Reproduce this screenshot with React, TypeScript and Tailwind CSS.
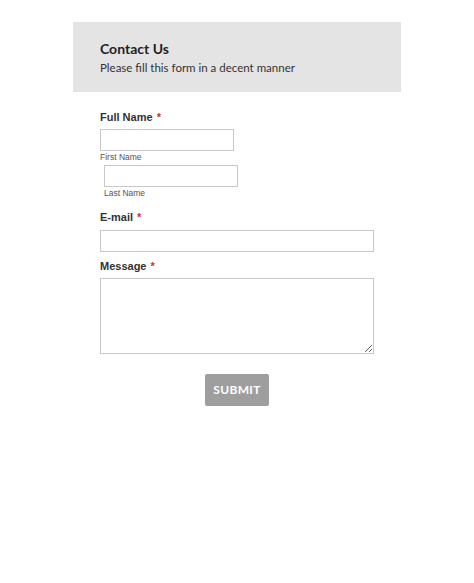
export default function App() {
  const label = "font-['Liberation_Sans',Arial,sans-serif] font-bold text-[11px] leading-[14px] text-[#333]"
  const sub = "font-['Liberation_Sans',Arial,sans-serif] text-[8.5px] leading-[11px] text-[#555]"
  const input = "block border border-[#c8c8c8] bg-white"

  return (
    <div className="min-h-[583px] bg-white">
      <div className="mx-auto w-[328px] pt-[22px]">
        <div className="h-[70px] bg-[#e4e4e4] pl-[27px] pt-[18px] font-['Lato',sans-serif]">
          <h1 className="text-[14px] leading-[18px] font-bold text-[#222]">Contact Us</h1>
          <p className="mt-[2px] text-[11.5px] leading-[16px] text-[#333]">Please fill this form in a decent manner</p>
        </div>

        <div className="px-[27px] pt-[18px]">
          <div className={label}>Full Name <span className="ml-[1px] text-[#c0392b]">*</span></div>
          <div className="mt-[5px] flex flex-col">
            <input className={`${input} w-[134px] h-[22px]`} />
            <span className={`${sub} mt-[1px]`}>First Name</span>
            <input className={`${input} ml-[4px] mt-[2px] w-[134px] h-[22px]`} />
            <span className={`${sub} ml-[4px] mt-[1px]`}>Last Name</span>
          </div>

          <div className={`${label} mt-[11px]`}>E-mail <span className="ml-[1px] text-[#c0392b]">*</span></div>
          <input className={`${input} mt-[6px] w-full h-[22px]`} />

          <div className={`${label} mt-[7px]`}>Message <span className="ml-[1px] text-[#c0392b]">*</span></div>
          <textarea className={`${input} mt-[5px] w-full h-[76px] resize-y`} />

          <div className="flex justify-center pt-[20px]">
            <button className="h-[32px] w-[64px] rounded-[2px] bg-[#9e9e9e] text-white font-['Lato',sans-serif] font-bold text-[12px] tracking-wide">
              SUBMIT
            </button>
          </div>
        </div>
      </div>
    </div>
  )
}
